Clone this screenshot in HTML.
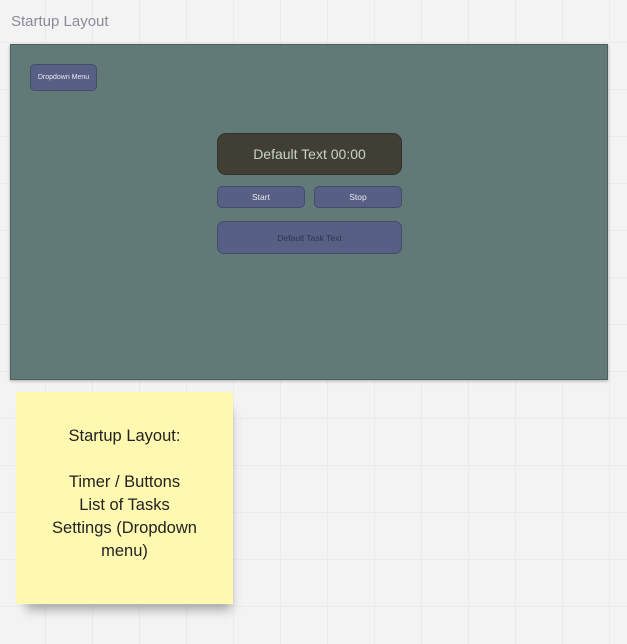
<!DOCTYPE html>
<html><head><style>
html,body{margin:0;padding:0}
body{width:627px;height:644px;overflow:hidden;position:relative;background-color:#f3f3f3;
background-image:linear-gradient(90deg,#ebebeb 1px,transparent 1px),linear-gradient(#ebebeb 1px,transparent 1px);
background-size:47px 47px;background-position:45px 42px;font-family:"Liberation Sans",sans-serif}
.title{position:absolute;left:11px;top:13px;font-size:15px;color:#8a8a9a}
.frame{position:absolute;left:10px;top:44px;width:596px;height:334px;background:#617a78;border:1px solid #4d5f5e;box-shadow:0 1px 3px rgba(0,0,0,.3)}
.btn{position:absolute;background:#575f85;border:1px solid #444c6a;border-radius:5px;color:#e8e8f0;display:flex;align-items:center;justify-content:center;box-sizing:border-box}
.sticky{position:absolute;left:16px;top:392px;width:217px;height:212px;background:#fff8b0;box-shadow:4px 12px 10px -6px rgba(0,0,0,.3);text-align:center;font-size:16.5px;line-height:23px;color:#222;box-sizing:border-box;padding-top:33px}
</style></head><body>
<div class="title">Startup Layout</div>
<div class="frame">
<div class="btn" style="left:19px;top:19px;width:67px;height:27px;font-size:7px;border-radius:5px">Dropdown Menu</div>
<div class="btn" style="left:206px;top:88px;width:185px;height:42px;background:#413f34;border-color:#33322a;border-radius:9px;font-size:14px;color:#c8d4c8">Default Text 00:00</div>
<div class="btn" style="left:206px;top:141px;width:88px;height:22px;font-size:8.5px">Start</div>
<div class="btn" style="left:303px;top:141px;width:88px;height:22px;font-size:8.5px">Stop</div>
<div class="btn" style="left:206px;top:176px;width:185px;height:33px;font-size:8.5px;color:#2e3550;border-radius:7px">Default Task Text</div>
</div>
<div class="sticky">Startup Layout:<br><br>Timer / Buttons<br>List of Tasks<br>Settings (Dropdown<br>menu)</div>
</body></html>
